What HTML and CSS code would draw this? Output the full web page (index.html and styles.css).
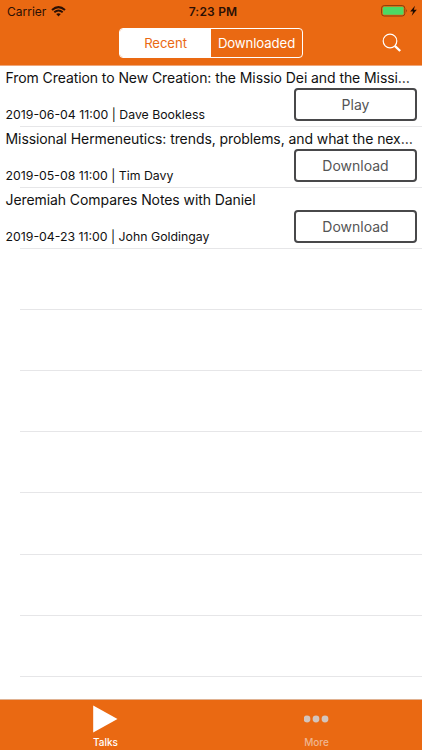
FILE: index.html
```html
<!DOCTYPE html>
<html lang="en">
<head>
<meta charset="UTF-8">
<meta name="viewport" content="width=device-width, initial-scale=1.0">
<title>Talks</title>
<link rel="stylesheet" href="styles.css">
</head>
<body>

<div class="app">
  <header class="header">
    <div class="status-bar">
      <div class="status-left">
        <span class="carrier">Carrier</span>
        <svg class="wifi" width="15" height="11" viewBox="0 0 15 11">
          <path d="M1 4 Q7.5 -1.8 14 4" fill="none" stroke="#2a1005" stroke-width="2"/>
          <path d="M3.3 6.3 Q7.5 2.7 11.7 6.3" fill="none" stroke="#2a1005" stroke-width="1.9"/>
          <path d="M5.2 8.1 Q7.5 6.2 9.8 8.1 L7.5 10.4 Z" fill="#2a1005"/>
        </svg>
      </div>
      <span class="time">7:23 PM</span>
      <div class="status-right">
        <svg width="38" height="12" viewBox="0 0 38 12">
          <rect x="0.6" y="0.6" width="23.2" height="10.4" rx="2.6" fill="none" stroke="#8a3c0c" stroke-width="1"/>
          <rect x="1.8" y="1.8" width="20.8" height="8" rx="1.4" fill="#4cd964"/>
          <path d="M25 4 Q26.8 5.8 25 7.6 Z" fill="#8a3c0c"/>
          <path d="M34 0.8 L29.2 6.5 H32.1 L30.7 10.8 L35.8 4.8 H32.8 Z" fill="#1c0a02"/>
        </svg>
      </div>
    </div>
    <div class="nav-bar">
      <div class="segmented">
        <button class="segment active">Recent</button>
        <button class="segment">Downloaded</button>
      </div>
      <button class="search">
        <svg width="20" height="20" viewBox="0 0 20 20">
          <circle cx="8" cy="8" r="6.8" fill="none" stroke="#fff" stroke-width="1.2"/>
          <path d="M12.8 12.8 L18.2 18" stroke="#fff" stroke-width="2.3"/>
        </svg>
      </button>
    </div>
  </header>

  <main class="talks">
    <div class="talk">
      <div class="title">From Creation to New Creation: the Missio Dei and the Missi…</div>
      <div class="details">
        <span class="meta">2019-06-04 11:00 | Dave Bookless</span>
        <button class="action">Play</button>
      </div>
    </div>
    <div class="talk">
      <div class="title">Missional Hermeneutics: trends, problems, and what the nex…</div>
      <div class="details">
        <span class="meta">2019-05-08 11:00 | Tim Davy</span>
        <button class="action">Download</button>
      </div>
    </div>
    <div class="talk">
      <div class="title">Jeremiah Compares Notes with Daniel</div>
      <div class="details">
        <span class="meta">2019-04-23 11:00 | John Goldingay</span>
        <button class="action">Download</button>
      </div>
    </div>
    <!-- empty rows -->
    <div class="talk"></div>
    <div class="talk"></div>
    <div class="talk"></div>
    <div class="talk"></div>
    <div class="talk"></div>
    <div class="talk"></div>
    <div class="talk"></div>
  </main>

  <nav class="tab-bar">
    <a class="tab active">
      <svg width="26" height="28" viewBox="0 0 26 28">
        <path d="M0.2 0.5 L24.5 14 L0.2 27.5 Z" fill="#fff"/>
      </svg>
      <span>Talks</span>
    </a>
    <a class="tab">
      <svg width="26" height="28" viewBox="0 0 26 28">
        <circle cx="3" cy="14" r="3.4" fill="#d3c5bd"/>
        <circle cx="12" cy="14" r="3.4" fill="#d3c5bd"/>
        <circle cx="21" cy="14" r="3.4" fill="#d3c5bd"/>
      </svg>
      <span>More</span>
    </a>
  </nav>
</div>

</body>
</html>
```
FILE: styles.css
```css
* {
  box-sizing: border-box;
}
body {
  margin: 0;
  font-family: Inter, "Liberation Sans", sans-serif;
  color: #111;
}
button {
  font-family: inherit;
  padding: 0;
  margin: 0;
  background: none;
  border: none;
}
.app {
  height: 750px;
  display: flex;
  flex-direction: column;
  overflow: hidden;
  background-color: #fff;
}
.header {
  height: 66px;
  flex: none;
  background-color: #ea6912;
  border-bottom: 1px solid #efa679;
}
.status-bar {
  height: 22px;
  display: grid;
  grid-template-columns: 1fr auto 1fr;
  align-items: center;
  padding: 0 3px 0 7px;
  font-size: 12px;
  color: #2a1005;
}
.status-left {
  display: flex;
  align-items: center;
  gap: 5px;
}
.status-right {
  display: flex;
  justify-content: flex-end;
}
.time {
  font-weight: 600;
  letter-spacing: 0.2px;
}
.nav-bar {
  display: grid;
  grid-template-columns: 1fr 184px 1fr;
  align-items: center;
  padding-top: 6px;
}
.segmented {
  grid-column: 2;
  display: flex;
  height: 30px;
  border: 1px solid #fff;
  border-radius: 4px;
  overflow: hidden;
}
.segment {
  flex: 1 1 50%;
  font-size: 13.2px;
  letter-spacing: -0.1px;
  color: #fff;
}
.segment.active {
  background-color: #fff;
  color: #ea6912;
}
.search {
  justify-self: end;
  height: 20px;
  margin-right: 20px;
}
.search svg {
  display: block;
}
.talks {
  flex: 1;
  overflow: hidden;
}
.talk {
  height: 61.07px;
  padding: 2px 5px 0 5.5px;
  background: linear-gradient(#e6e6e8, #e6e6e8) 20px 100% / 100% 1px no-repeat;
}
.title {
  height: 20px;
  line-height: 20px;
  font-size: 14px;
  letter-spacing: -0.08px;
  white-space: nowrap;
}
.details {
  display: flex;
  justify-content: space-between;
}
.meta {
  padding-top: 18px;
  line-height: 18px;
  font-size: 12.3px;
}
.action {
  width: 123px;
  height: 33px;
  border: 2px solid #48484a;
  border-radius: 4px;
  font-size: 14px;
  color: #555;
}
.tab-bar {
  height: 51px;
  flex: none;
  display: flex;
  background-color: #ea6912;
  border-top: 1px solid #e0b292;
}
.tab {
  flex: 1;
  display: flex;
  flex-direction: column;
  align-items: center;
  padding-top: 5px;
  font-size: 10px;
  font-weight: 500;
  color: #efb690;
}
.tab span {
  line-height: 12px;
  margin-top: 3px;
}
.tab.active {
  color: #fff;
}
```
